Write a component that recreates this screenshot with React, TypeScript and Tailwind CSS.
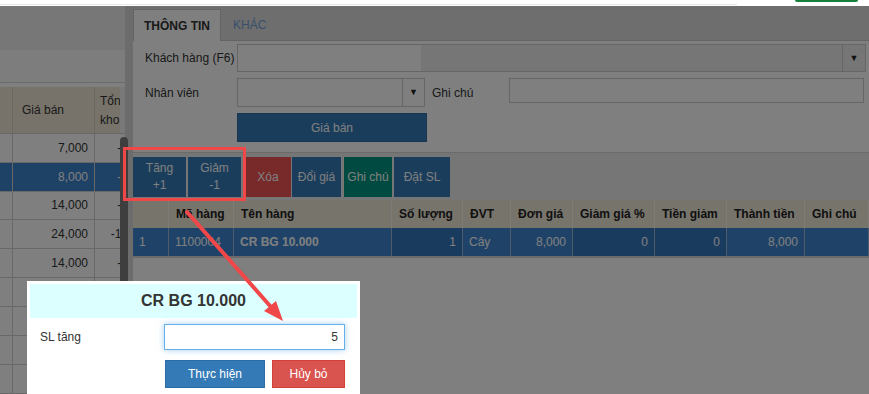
import React from 'react';

// Left product list (behind the modal backdrop)
const leftRows = [
  { price: '7,000', stock: '-2' },
  { price: '8,000', stock: '-4', selected: true },
  { price: '14,000', stock: '-6' },
  { price: '24,000', stock: '-15' },
  { price: '14,000', stock: '-3' },
  { price: '14,000', stock: '-8' },
  { price: '9,000', stock: '-2' },
  { price: '12,000', stock: '-5' },
  { price: '6,000', stock: '-1' },
];

const cols = [
  { key: 'stt', label: '', w: 'w-[36px]' },
  { key: 'ma', label: 'Mã hàng', w: 'w-[65px]' },
  { key: 'ten', label: 'Tên hàng', w: 'w-[158px]' },
  { key: 'sl', label: 'Số lượng', w: 'w-[71px]' },
  { key: 'dvt', label: 'ĐVT', w: 'w-[48px]' },
  { key: 'dg', label: 'Đơn giá', w: 'w-[62px]' },
  { key: 'gg', label: 'Giảm giá %', w: 'w-[82px]' },
  { key: 'tg', label: 'Tiền giảm', w: 'w-[72px]' },
  { key: 'tt', label: 'Thành tiền', w: 'w-[78px]' },
  { key: 'gc', label: 'Ghi chú', w: 'w-[64px]' },
];

const orderRow: Record<string, { text: string; right?: boolean; bold?: boolean; edit?: boolean }> = {
  stt: { text: '1' },
  ma: { text: '1100004' },
  ten: { text: 'CR BG 10.000', bold: true },
  sl: { text: '1', right: true, edit: true },
  dvt: { text: 'Cây' },
  dg: { text: '8,000', right: true },
  gg: { text: '0', right: true, edit: true },
  tg: { text: '0', right: true, edit: true },
  tt: { text: '8,000', right: true },
  gc: { text: '' },
};

function LeftPanel() {
  return (
    <div className="w-[125px] flex flex-col shrink-0 bg-white">
      <div className="h-[44px] bg-[#eeeeee]" />
      <div className="h-[33px] bg-[#fafafa] border-b border-[#d6d6d6]" />
      <div className="h-[4px]" />
      <div className="flex h-[47px] border-b border-[#d0d0d0] bg-[#eee6d4] text-[#333]">
        <div className="w-[13px] border-r border-[#d8d0bf]" />
        <div className="w-[82px] border-r border-[#d8d0bf] flex items-center pl-[9px]">Giá bán</div>
        <div className="w-[25px] overflow-hidden pl-[5px] pt-[5px]">
          <div className="w-[40px] leading-[19px]">Tổng kho</div>
        </div>
        <div className="w-[5px] bg-[#f2f2f2]" />
      </div>
      {leftRows.map((r, i) => (
        <div
          key={i}
          className={`flex h-[29px] border-b border-[#d0d0d0] ${r.selected ? 'bg-[#3d84cc] text-white' : 'text-[#333]'}`}
        >
          <div className="w-[13px] border-r border-[#d0d0d0]" />
          <div className="w-[82px] border-r border-[#d0d0d0] flex items-center justify-end pr-[6px]">{r.price}</div>
          <div className="w-[25px] overflow-hidden">
            <div className="w-[41px] h-full flex items-center justify-end pr-[8px] whitespace-nowrap">{r.stock}</div>
          </div>
          <div className="w-[5px]" />
        </div>
      ))}
    </div>
  );
}

function Arrow() {
  return <span className="text-[9px] text-[#222] leading-none">▼</span>;
}

function RightPanel() {
  return (
    <div className="flex-1 flex flex-col bg-white text-[#333]">
      {/* tabs */}
      <div className="h-[35px] bg-[#dcdcdc] border-b border-[#c8c8c8] flex items-end">
        <div className="h-[32px] w-[88px] -mb-px bg-white border border-b-0 border-[#c8c8c8] flex items-center justify-center font-bold">
          THÔNG TIN
        </div>
        <div className="h-[31px] flex items-center pl-[12px] text-[#6f9fd6]">KHÁC</div>
      </div>

      {/* form */}
      <div className="pt-[3px] pb-[10px]">
        <div className="flex h-[28px]">
          <div className="w-[104px] pl-[12px] flex items-center">Khách hàng (F6)</div>
          <div className="w-[629px] flex border border-[#cccccc]">
            <div className="w-[183px] bg-white" />
            <div className="flex-1 bg-[#ececec]" />
            <div className="w-[23px] bg-[#ececec] border-l border-[#cccccc] flex items-center justify-center">
              <Arrow />
            </div>
          </div>
        </div>
        <div className="flex h-[29px] mt-[6px]">
          <div className="w-[104px] pl-[12px] flex items-center">Nhân viên</div>
          <div className="w-[188px] flex border border-[#cccccc]">
            <div className="flex-1" />
            <div className="w-[22px] border-l border-[#cccccc] flex items-center justify-center">
              <Arrow />
            </div>
          </div>
          <div className="w-[84px] pl-[7px] flex items-center">Ghi chú</div>
          <div className="w-[355px] h-[25px] border border-[#cccccc]" />
        </div>
        <div className="flex mt-[6px]">
          <div className="w-[104px]" />
          <div className="w-[190px] h-[29px] bg-[#337ab7] border border-[#2e6da4] text-white flex items-center justify-center">
            Giá bán
          </div>
        </div>
      </div>

      {/* action buttons */}
      <div className="h-[48px] border-t border-[#d6d6d6] bg-[#ececec] flex pt-[4px] text-white text-center leading-[17px]">
        <div className="w-[53px] h-[40px] bg-[#337ab7] flex flex-col justify-center">
          <span>Tăng</span>
          <span>+1</span>
        </div>
        <div className="w-[53px] h-[40px] ml-[2px] bg-[#337ab7] flex flex-col justify-center">
          <span>Giảm</span>
          <span>-1</span>
        </div>
        <div className="w-[46px] h-[40px] ml-[4px] bg-[#f05252] flex items-center justify-center">Xóa</div>
        <div className="w-[49px] h-[40px] ml-[1px] bg-[#337ab7] flex items-center justify-center">Đổi giá</div>
        <div className="w-[48px] h-[40px] ml-[3px] bg-[#009483] flex items-center justify-center">Ghi chú</div>
        <div className="w-[56px] h-[40px] ml-[2px] bg-[#337ab7] flex items-center justify-center">Đặt SL</div>
      </div>

      {/* order table */}
      <div className="flex h-[28px] bg-[#eee8d8] font-bold text-[#222]">
        {cols.map((c) => (
          <div key={c.key} className={`${c.w} shrink-0 border-r border-[#fbf8f0] flex items-center pl-[7px] whitespace-nowrap`}>
            {c.label}
          </div>
        ))}
      </div>
      <div className="flex h-[28px] bg-[#3e87d0] text-white">
        {cols.map((c) => {
          const cell = orderRow[c.key];
          return (
            <div
              key={c.key}
              className={`${c.w} shrink-0 border-r border-[#9ab6d6] flex items-center px-[6px] whitespace-nowrap ${
                cell.right ? 'justify-end' : ''
              } ${cell.bold ? 'font-bold' : ''} ${cell.edit ? 'bg-[#3276bb]' : ''}`}
            >
              {cell.text}
            </div>
          );
        })}
      </div>
      <div className="h-[2px] bg-[#d5d5d5]" />
      <div className="flex-1 bg-white" />
    </div>
  );
}

export default function App() {
  return (
    <div className="relative w-[869px] h-[394px] overflow-hidden bg-white text-[12px] font-['Liberation_Sans',Arial,sans-serif]">
      {/* top strip of the host page */}
      <div className="relative h-[6px] bg-white">
        <div className="absolute left-0 top-[4px] w-[737px] h-px bg-[#e6e6e6]" />
        <div className="absolute left-[795px] top-0 w-[63px] h-[2px] bg-[#16803c] rounded-b-sm" />
      </div>

      <div className="relative flex h-[388px]">
        <LeftPanel />
        <div className="w-[8px] bg-[#d8d8d8] shrink-0" />
        <RightPanel />
        {/* scrollbar thumb */}
        <div className="absolute left-[120px] top-[131px] w-[8px] h-[270px] rounded-full bg-[#7c7c7c]" />
        {/* modal backdrop */}
        <div className="absolute inset-0 bg-black/50" />
      </div>

      {/* dialog */}
      <div className="absolute left-[27px] top-[281px] w-[333px] h-[120px] bg-white p-[3px] text-[#333]">
        <div className="h-[34px] bg-[#dcffff] flex items-center justify-center text-[16px] font-bold">CR BG 10.000</div>
        <div className="flex items-center mt-[6px]">
          <div className="w-[134px] pl-[10px]">SL tăng</div>
          <input
            readOnly
            value="5"
            className="w-[181px] h-[26px] border border-[#66afe9] shadow-[0_0_6px_rgba(102,175,233,0.6)] text-right pr-[6px] outline-none text-[#333]"
          />
        </div>
        <div className="flex justify-end mt-[10px] pr-[12px] text-white">
          <div className="w-[100px] h-[28px] bg-[#337ab7] border border-[#2e6da4] flex items-center justify-center">Thực hiện</div>
          <div className="w-[73px] h-[28px] ml-[7px] bg-[#d9534f] border border-[#d43f3a] flex items-center justify-center">Hủy bỏ</div>
        </div>
      </div>

      {/* annotation: highlight box + arrow */}
      <div className="absolute left-[123px] top-[147px] w-[123px] h-[54px] border-[3px] border-[#f04848]" />
      <svg className="absolute inset-0 pointer-events-none" width="869" height="394">
        <line x1="187" y1="212" x2="271" y2="307" stroke="#f04848" strokeWidth="4" strokeLinecap="round" />
        <polygon points="283,321 264,311 276,301" fill="#f04848" />
      </svg>
    </div>
  );
}
